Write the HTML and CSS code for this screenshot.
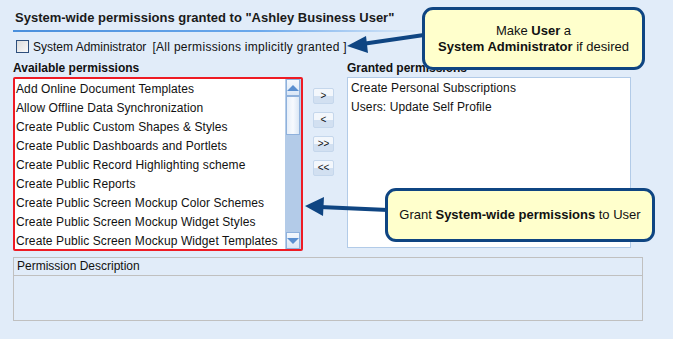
FILE: index.html
```html
<!DOCTYPE html>
<html>
<head>
    <meta charset="UTF-8">
    <title>System-wide permissions</title>
    <link rel="stylesheet" href="styles.css">
</head>
<body>
    <div class="pane">
        <h1 class="title">System-wide permissions granted to "Ashley Business User"</h1>
        <div class="title-line"></div>

        <div class="admin-row">
            <span class="checkbox"></span>
            <span>System Administrator</span>
            <span class="hint">[All permissions implicitly granted ]</span>
        </div>

        <div class="lists">
            <div class="col-avail">
                <div class="list-label">Available permissions</div>
                <div class="listbox avail">
                    <ul class="items">
                        <li>Add Online Document Templates</li>
                        <li>Allow Offline Data Synchronization</li>
                        <li>Create Public Custom Shapes &amp; Styles</li>
                        <li>Create Public Dashboards and Portlets</li>
                        <li>Create Public Record Highlighting scheme</li>
                        <li>Create Public Reports</li>
                        <li>Create Public Screen Mockup Color Schemes</li>
                        <li>Create Public Screen Mockup Widget Styles</li>
                        <li>Create Public Screen Mockup Widget Templates</li>
                    </ul>
                    <div class="scrollbar">
                        <div class="sb-btn"><span class="tri up"></span></div>
                        <div class="sb-thumb"></div>
                        <div class="sb-track"></div>
                        <div class="sb-btn"><span class="tri down"></span></div>
                    </div>
                </div>
            </div>

            <div class="movers">
                <button class="mv">&gt;</button>
                <button class="mv">&lt;</button>
                <button class="mv">&gt;&gt;</button>
                <button class="mv">&lt;&lt;</button>
            </div>

            <div class="col-granted">
                <div class="list-label">Granted permissions</div>
                <div class="listbox granted">
                    <ul class="items">
                        <li>Create Personal Subscriptions</li>
                        <li>Users: Update Self Profile</li>
                    </ul>
                </div>
            </div>
        </div>

        <div class="desc">
            <div class="desc-head">Permission Description</div>
            <div class="desc-body"></div>
        </div>
    </div>

    <svg class="arrows" width="673" height="339" viewBox="0 0 673 339">
        <line x1="424" y1="35" x2="362" y2="44" stroke="#0f4582" stroke-width="4"/>
        <polygon points="347,46 366,36 368,53" fill="#0f4582"/>
        <line x1="388" y1="210" x2="320" y2="207" stroke="#0f4582" stroke-width="4"/>
        <polygon points="305,206 324,197 323,216" fill="#0f4582"/>
    </svg>

    <div class="callout c1"><p>Make <b>User</b> a<br><b>System Administrator</b> if desired</p></div>
    <div class="callout c2"><p>Grant <b>System-wide permissions</b> to User</p></div>
</body>
</html>
```

FILE: styles.css
```css
body {
    margin: 0;
    background: #e1ecf9;
    font-family: "Liberation Sans", Arial, sans-serif;
    font-size: 12px;
    color: #000;
    width: 673px;
    height: 339px;
    overflow: hidden;
    position: relative;
}

.pane {
    padding: 9px 30px 0 13px;
}

.title {
    font-size: 13px;
    font-weight: bold;
    color: #1a1a1a;
    margin: 0 0 0 2px;
    line-height: 17px;
}

.title-line {
    margin-top: 4px;
    width: 410px;
    height: 2px;
    background: linear-gradient(to right, #4a8fdc, #6aa8ec 60%, rgba(168, 204, 242, 0));
}

.admin-row {
    display: flex;
    align-items: center;
    margin: 7px 0 0 3px;
    height: 15px;
    color: #111;
}

.checkbox {
    width: 11px;
    height: 11px;
    border: 1px solid #2e4f7c;
    background: linear-gradient(135deg, #dcdcdc, #fafafa);
    margin-right: 4px;
}

.hint {
    margin-left: 6px;
    letter-spacing: 0.3px;
}

.lists {
    display: flex;
    margin-top: 7px;
}

.list-label {
    font-weight: bold;
    line-height: 15px;
    color: #111;
}

.col-avail {
    width: 290px;
}

.listbox {
    background: #fff;
    display: flex;
    margin-top: 1px;
}

.listbox.avail {
    border: 2px solid #ee1b24;
    border-radius: 2px;
    height: 170px;
}

.items {
    list-style: none;
    margin: 0;
    padding: 1px 0 0 1px;
    flex: 1;
}

.items li {
    height: 19px;
    line-height: 19px;
    white-space: nowrap;
    color: #111;
    letter-spacing: 0.1px;
}

.scrollbar {
    width: 16px;
    display: flex;
    flex-direction: column;
    background: #b5cde9;
}

.sb-btn {
    height: 15px;
    border: 1px solid #8fb1dc;
    background: linear-gradient(to bottom, #f4f8fd, #dbe7f6);
    display: flex;
    align-items: center;
    justify-content: center;
    margin: 0 1px;
}

.sb-thumb {
    height: 37px;
    border: 1px solid #8fb1dc;
    background: linear-gradient(to right, #e7eff9, #f7fafe 50%, #dbe7f5);
    margin: 0 1px;
}

.sb-track {
    flex: 1;
    background: #b3cbe8;
}

.tri {
    width: 0;
    height: 0;
    border-left: 6px solid transparent;
    border-right: 6px solid transparent;
}

.tri.up {
    border-bottom: 6px solid #5b8fd0;
}

.tri.down {
    border-top: 6px solid #5b8fd0;
}

.movers {
    display: flex;
    flex-direction: column;
    gap: 8px;
    margin: 27px 0 0 10px;
    width: 34px;
}

.mv {
    width: 21px;
    height: 16px;
    padding: 0;
    border: 1px solid #c5d7ec;
    border-radius: 2px;
    background: linear-gradient(to bottom, #f3f7fc 50%, #d2e0f1 50%);
    font-family: "Liberation Sans", Arial, sans-serif;
    font-size: 10px;
    color: #111;
    line-height: 12px;
}

.col-granted {
    flex: 1;
}

.listbox.granted {
    border: 1px solid #b2cbe8;
    height: 169px;
    width: 282px;
}

.listbox.granted .items {
    padding: 1px 0 0 3px;
}

.desc {
    margin-top: 6px;
    border: 1px solid #c0c0c0;
    width: 628px;
}

.desc-head {
    height: 17px;
    line-height: 17px;
    border-bottom: 1px solid #c0c0c0;
    padding-left: 3px;
    color: #111;
}

.desc-body {
    height: 44px;
}

.arrows {
    position: absolute;
    left: 0;
    top: 0;
}

.callout {
    position: absolute;
    background: #ffffcc;
    border: 3px solid #0f4582;
    border-radius: 11px;
    text-align: center;
    color: #111;
    font-size: 13px;
    display: flex;
    align-items: center;
    justify-content: center;
    line-height: 16px;
}

.callout p {
    margin: 0;
}

.c1 {
    left: 422px;
    top: 7px;
    width: 217px;
    height: 57px;
}

.c2 {
    left: 385px;
    top: 188px;
    width: 264px;
    height: 48px;
}
```
